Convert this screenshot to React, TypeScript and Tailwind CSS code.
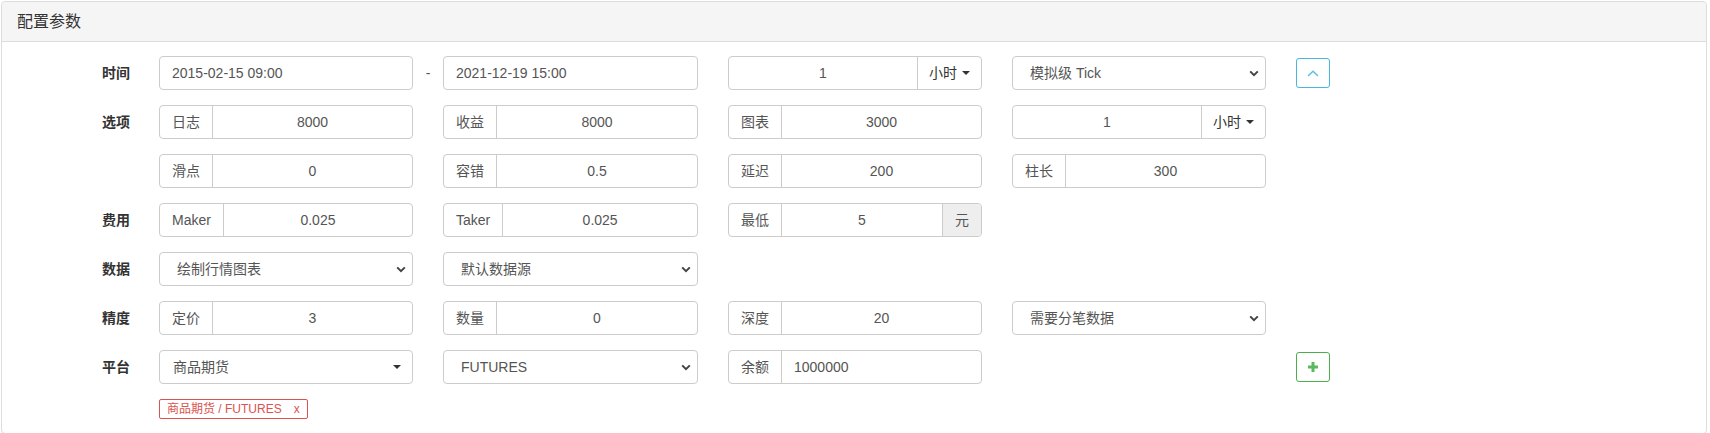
import React from 'react';

const box = 'h-[34px] rounded-[4px] border border-[#ccc] bg-white text-[14px] text-[#555] flex overflow-hidden';

const Caret = () => (
  <span className="ml-[5px] inline-block h-0 w-0 border-x-[4px] border-t-[4px] border-x-transparent border-t-[#333]" />
);

const Chevron = () => (
  <svg width="10" height="7" viewBox="0 0 10 7" className="shrink-0">
    <path d="M1.2 1.4 5 5.2 8.8 1.4" fill="none" stroke="#444" strokeWidth="2" />
  </svg>
);

const TextBox = ({ value }: { value: string }) => (
  <div className={`${box} items-center px-3`}>
    <span>{value}</span>
  </div>
);

interface GroupProps {
  addon?: string;
  value: string;
  left?: boolean;
  suffix?: string;
  unit?: string;
}

const Group = ({ addon, value, left, suffix, unit }: GroupProps) => (
  <div className={`${box} items-stretch`}>
    {addon && (
      <span className="flex items-center border-r border-[#ccc] px-3 text-[#555]">{addon}</span>
    )}
    <span className={`flex flex-1 items-center ${left ? 'px-3' : 'justify-center'}`}>{value}</span>
    {suffix && (
      <span className="flex items-center border-l border-[#ccc] bg-[#eee] px-3 text-[#555]">{suffix}</span>
    )}
    {unit && (
      <span className="flex w-[64px] items-center justify-center border-l border-[#ccc] text-[#333]">
        {unit}
        <Caret />
      </span>
    )}
  </div>
);

const Select = ({ value }: { value: string }) => (
  <div className={`${box} items-center justify-between pl-[17px] pr-[6px]`}>
    <span>{value}</span>
    <Chevron />
  </div>
);

const DropButton = ({ value }: { value: string }) => (
  <div className={`${box} items-center justify-between pl-[13px] pr-[11px] text-[#333]`}>
    <span>{value}</span>
    <Caret />
  </div>
);

const Row = ({ label, children }: { label?: string; children: React.ReactNode }) => (
  <div className="flex items-center">
    <div className="w-[128px] text-right text-[14px] font-bold text-[#333]">{label}</div>
    <div className="ml-[29px] grid grid-cols-[254px_30px_255px_30px_254px_30px_254px_30px_34px] items-center">
      {children}
    </div>
  </div>
);

const Gap = ({ children }: { children?: React.ReactNode }) => (
  <div className="flex justify-center text-[14px] text-[#555]">{children}</div>
);

export default function App() {
  return (
    <div className="min-h-[433px] bg-white pt-px font-['Liberation_Sans','Noto_Sans_CJK_SC',sans-serif]">
      <div className="ml-px w-[1706px] rounded-[4px] border border-[#ddd]">
        <div className="flex h-[40px] items-center rounded-t-[4px] border-b border-[#ddd] bg-[#f5f5f5] px-[15px] text-[16px] text-[#333]">
          配置参数
        </div>
        <div className="flex flex-col gap-[15px] pb-[14px] pt-[14px]">
          <Row label="时间">
            <TextBox value="2015-02-15 09:00" />
            <Gap>-</Gap>
            <TextBox value="2021-12-19 15:00" />
            <Gap />
            <Group value="1" unit="小时" />
            <Gap />
            <Select value="模拟级 Tick" />
            <Gap />
            <button className="flex h-[30px] w-[34px] items-center justify-center rounded-[3px] border border-[#46b8da] bg-white">
              <svg width="12" height="7" viewBox="0 0 12 7">
                <path d="M1 6 6 1.2 11 6" fill="none" stroke="#5bc0de" strokeWidth="1.4" />
              </svg>
            </button>
          </Row>
          <Row label="选项">
            <Group addon="日志" value="8000" />
            <Gap />
            <Group addon="收益" value="8000" />
            <Gap />
            <Group addon="图表" value="3000" />
            <Gap />
            <Group value="1" unit="小时" />
          </Row>
          <Row>
            <Group addon="滑点" value="0" />
            <Gap />
            <Group addon="容错" value="0.5" />
            <Gap />
            <Group addon="延迟" value="200" />
            <Gap />
            <Group addon="柱长" value="300" />
          </Row>
          <Row label="费用">
            <Group addon="Maker" value="0.025" />
            <Gap />
            <Group addon="Taker" value="0.025" />
            <Gap />
            <Group addon="最低" value="5" suffix="元" />
          </Row>
          <Row label="数据">
            <Select value="绘制行情图表" />
            <Gap />
            <Select value="默认数据源" />
          </Row>
          <Row label="精度">
            <Group addon="定价" value="3" />
            <Gap />
            <Group addon="数量" value="0" />
            <Gap />
            <Group addon="深度" value="20" />
            <Gap />
            <Select value="需要分笔数据" />
          </Row>
          <Row label="平台">
            <DropButton value="商品期货" />
            <Gap />
            <Select value="FUTURES" />
            <Gap />
            <Group addon="余额" value="1000000" left />
            <Gap />
            <div />
            <Gap />
            <button className="flex h-[30px] w-[34px] items-center justify-center rounded-[3px] border border-[#4cae4c] bg-white">
              <svg width="12" height="12" viewBox="0 0 12 12">
                <path d="M6 1v10M1 6h10" fill="none" stroke="#5cb85c" strokeWidth="3" />
              </svg>
            </button>
          </Row>
          <div className="ml-[157px] flex">
            <span className="flex h-[20px] items-center gap-[12px] rounded-[2px] border border-[#d9534f] px-[7px] text-[12px] text-[#d9534f]">
              <span>商品期货 / FUTURES</span>
              <span>x</span>
            </span>
          </div>
        </div>
      </div>
    </div>
  );
}
